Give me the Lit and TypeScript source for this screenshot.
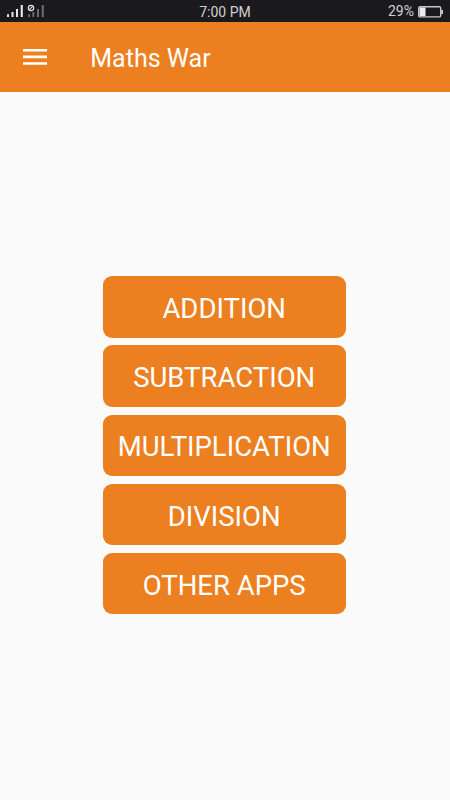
import { LitElement, html, css } from "lit";
import { customElement } from "lit/decorators.js";

@customElement("app-root")
export class AppRoot extends LitElement {
  static styles = css`
    :host { display: block; width: 450px; height: 800px; background: #fafafa; font-family: Roboto, sans-serif; overflow: hidden; }
    .status { height: 22.3px; background: #1a191e; color: #d0d0d0; display: grid; grid-template-columns: 1fr auto 1fr; grid-template-rows: 22px; align-items: start; box-sizing: border-box; padding: 0 7px; font-size: 14px; line-height: 22px; }
    .signals { display: block; }
    .clock { padding-top: 1px; }
    .power { display: flex; justify-content: flex-end; align-items: center; gap: 4px; height: 22px; }
    .battery { display: block; margin-top: 1px; }
    .bar { height: 70px; background: #ec8020; display: flex; align-items: center; padding-left: 23px; box-sizing: border-box; color: #fff; }
    .menu { display: block; width: 24px; height: 18px; }
    .title { margin: 3px 0 0 43.3px; font-size: 25px; font-weight: 400; line-height: 30px; white-space: nowrap; }
    .list { display: flex; flex-direction: column; gap: 7.8px; width: 243.4px; margin: 184px 0 0 102.5px; }
    .btn { height: 61.4px; box-sizing: border-box; border: 0; padding: 3px 0 0; border-radius: 9px; background: #ec8020; color: #fff; font: 400 27.5px Roboto, sans-serif; white-space: nowrap; }
  `;

  render() {
    const labels = ["ADDITION", "SUBTRACTION", "MULTIPLICATION", "DIVISION", "OTHER APPS"];
    return html`
      <div class="status">
        <svg class="signals" width="40" height="22" viewBox="0 0 40 22">
          <path fill="#e8e8e8" d="M0 14.3h2V17H0zM4.5 12h2v5h-2zM9 9h2v8H9zM13.7 5h2.1v12h-2.1z"/>
          <path fill="#6c6b70" d="M21 14.3h2V17h-2zM25.3 12h2v5h-2zM30 9h2v8h-2zM34.7 5h2.1v12h-2.1z"/>
          <circle cx="24" cy="8" r="2.7" fill="#1a191e" stroke="#ddd" stroke-width="1.2"/><path d="M22.3 9.7l3.4-3.4" stroke="#ddd" stroke-width="1.2"/>
        </svg>
        <span class="clock">7:00 PM</span>
        <div class="power"><span>29%</span>
          <svg class="battery" width="25" height="12" viewBox="0 0 25 12"><rect x=".7" y=".7" width="22" height="10.2" rx="1.5" fill="none" stroke="#c8c8c8" stroke-width="1.4"/><path fill="#eee" d="M1.5 1.5h6v8.6h-6z"/><path fill="#c8c8c8" d="M23.2 4H25v4h-1.8z"/></svg>
        </div>
      </div>
      <header class="bar">
        <svg class="menu" viewBox="0 0 24 18"><path fill="#fff" d="M0 .9h24v2.6H0zM0 7.6h24v2.6H0zM0 14.2h24v2.6H0z"/></svg>
        <h1 class="title">Maths War</h1>
      </header>
      <main class="list">${labels.map((l) => html`<button class="btn">${l}</button>`)}</main>
    `;
  }
}
